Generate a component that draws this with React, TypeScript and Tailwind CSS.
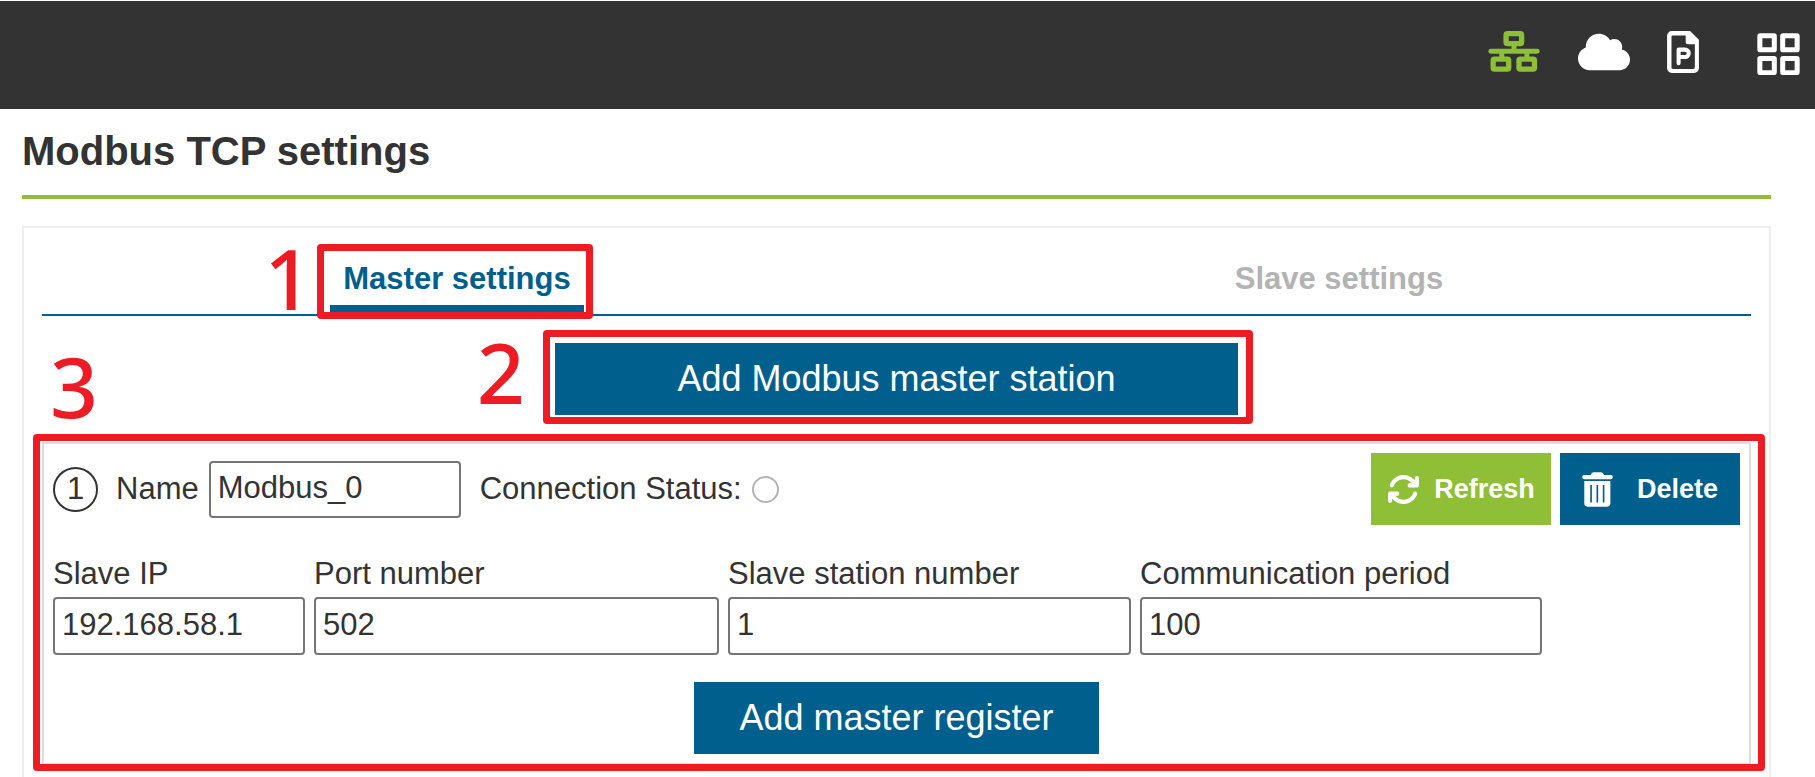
import { useState } from "react";
import { FaCloud } from "react-icons/fa";
import { FaArrowsRotate } from "react-icons/fa6";

function NetworkIcon() {
  return (
    <svg viewBox="0 0 156 124" className="h-[41px] w-[52px]" fill="none" stroke="currentColor" aria-hidden="true">
      <g strokeWidth="16">
        <rect x="54" y="8" width="47" height="30" rx="4" />
        <rect x="15" y="85" width="47" height="30" rx="4" />
        <rect x="93" y="85" width="47" height="30" rx="4" />
        <path d="M78 44V60M41 60V80M117 60V80" strokeWidth="15" />
      </g>
      <path d="M8 61H148" strokeWidth="15" strokeLinecap="round" />
    </svg>
  );
}

function ParameterFileIcon() {
  return (
    <svg viewBox="0 0 94 124" className="h-[42px] w-[32px]" aria-hidden="true">
      <path
        fill="currentColor"
        fillRule="evenodd"
        d="M14 0H68L94 26V110A14 14 0 0 1 80 124H14A14 14 0 0 1 0 110V14A14 14 0 0 1 14 0ZM17 13Q13 13 13 17V108Q13 112 17 112H77Q82 112 82 107V39H61Q55 39 55 33V13Z"
      />
      <path
        d="M34 95V55H53A11 11 0 0 1 53 77H34"
        fill="none"
        stroke="currentColor"
        strokeWidth="12"
        strokeLinecap="round"
        strokeLinejoin="round"
      />
    </svg>
  );
}

function GridIcon() {
  return (
    <svg viewBox="0 0 127 125" className="h-[42px] w-[43px]" fill="none" stroke="currentColor" strokeWidth="15" aria-hidden="true">
      <rect x="8" y="8" width="43" height="42" rx="1" />
      <rect x="76" y="8" width="43" height="42" rx="1" />
      <rect x="8" y="76" width="43" height="42" rx="1" />
      <rect x="76" y="76" width="43" height="42" rx="1" />
    </svg>
  );
}

function TrashIcon() {
  return (
    <svg viewBox="0 0 92 106" className="h-[35px] w-[31px]" fill="currentColor" aria-hidden="true">
      <path d="M25 9Q28 1 34 1H57Q63 1 66 9H87Q92 9 92 14V17Q92 22 87 22H5Q0 22 0 17V14Q0 9 5 9Z" />
      <path
        fillRule="evenodd"
        d="M6 27H85V95Q85 105 75 105H16Q6 105 6 95ZM24 39V92H29V39ZM43 39V92H48V39ZM62 39V92H67V39Z"
      />
    </svg>
  );
}

function Callout({ label, frame, place }: { label: string; frame: string; place: string }) {
  return (
    <>
      <span className={`pointer-events-none absolute rounded-[4px] border-[7px] border-[#ed1c24] ${frame}`} />
      <span
        className={`pointer-events-none absolute font-['Noto_Sans',sans-serif] text-[84px] leading-none font-medium text-[#ed1c24] ${place}`}
      >
        {label}
      </span>
    </>
  );
}

const inputClass =
  "min-w-0 rounded-[4px] border-2 border-[#767676] bg-white px-[7px] pb-[2px] text-[31px] leading-9 text-[#333]";

const fields = [
  { id: "slave-ip", label: "Slave IP", value: "192.168.58.1" },
  { id: "port", label: "Port number", value: "502" },
  { id: "station", label: "Slave station number", value: "1" },
  { id: "period", label: "Communication period", value: "100" },
];

function MasterStation() {
  return (
    <section className="relative mt-[27px] border-2 border-[#ddd] p-[9px] text-[31px] leading-9">
      <div className="flex items-center">
        <span className="flex size-[45px] items-center justify-center rounded-full border-2 border-[#333]">1</span>
        <label htmlFor="name" className="ml-[18px]">
          Name
        </label>
        <input id="name" defaultValue="Modbus_0" className={`ml-[10px] h-[57px] w-[252px] ${inputClass}`} />
        <span className="ml-[19px]">Connection Status:</span>
        <span className="ml-[10px] size-[27px] rounded-full border-2 border-[#b3b3b3]" />
        <div className="ml-auto flex gap-[9px] text-[27px] font-bold text-white">
          <button className="flex h-[72px] w-[180px] items-center justify-center gap-[14px] bg-[#8fbf36]">
            <FaArrowsRotate className="size-[33px]" />
            Refresh
          </button>
          <button className="flex h-[72px] w-[180px] items-center justify-center gap-[24px] bg-[#005f8c]">
            <TrashIcon />
            Delete
          </button>
        </div>
      </div>
      <div className="mt-[31px] grid grid-cols-[252fr_405fr_403fr_402fr_189fr] gap-[9px]">
        {fields.map((f) => (
          <div key={f.id} className="flex min-w-0 flex-col gap-[5px]">
            <label htmlFor={f.id} className="whitespace-nowrap">
              {f.label}
            </label>
            <input id={f.id} defaultValue={f.value} className={`h-[58px] w-full ${inputClass}`} />
          </div>
        ))}
      </div>
      <button className="mx-auto mt-[27px] block h-[72px] w-[24%] bg-[#005f8c] text-[36px] text-white">
        Add master register
      </button>
      <Callout label="3" frame="-left-[11px] -right-[16px] -top-[10px] -bottom-[8px]" place="left-[6px] -top-[100px]" />
    </section>
  );
}

export default function App() {
  const [tab, setTab] = useState("master");
  const tabClass = (name: string) =>
    name === tab ? "border-[#005f8c] text-[#005f8c]" : "border-transparent text-[#b3b3b3]";

  return (
    <div className="flex min-h-screen flex-col bg-white font-['Liberation_Sans',Arial,sans-serif] text-[#333]">
      <header className="border-t border-white">
        <nav className="flex h-[108px] items-center justify-end bg-[#333] pr-[15px] text-white">
          <button aria-label="Network" className="mb-2">
            <span className="text-[#8fbf36]">
              <NetworkIcon />
            </span>
          </button>
          <button aria-label="Cloud" className="mb-[6px] ml-[38px]">
            <FaCloud className="h-[42px] w-[52px]" />
          </button>
          <button aria-label="Parameters" className="mb-[6px] ml-[37px]">
            <ParameterFileIcon />
          </button>
          <button aria-label="Menu" className="mb-[2px] ml-[58px]">
            <GridIcon />
          </button>
        </nav>
      </header>
      <main className="flex flex-1 flex-col pt-[18px] pr-[44px] pl-[22px]">
        <h1 className="border-b-4 border-[#8fbf36] pb-5 text-[40px] leading-[48px] font-bold">Modbus TCP settings</h1>
        <div className="mt-[27px] flex-1 border-2 border-b-0 border-[#eee] px-[18px] pb-3">
          <div
            role="tablist"
            className="grid grid-cols-[830fr_824fr] justify-items-center gap-[55px] border-b-2 border-[#005f8c] pt-[33px] text-[31px] leading-9 font-bold"
          >
            <div className="relative">
              <button
                role="tab"
                aria-selected={tab === "master"}
                onClick={() => setTab("master")}
                className={`block border-b-[9px] px-[13px] pb-2 ${tabClass("master")}`}
              >
                Master settings
              </button>
              <Callout
                label="1"
                frame="-left-[13px] -right-[9px] -top-[17px] -bottom-[5px]"
                place="-left-[66px] -top-[25px]"
              />
            </div>
            <button
              role="tab"
              aria-selected={tab === "slave"}
              onClick={() => setTab("slave")}
              className={`block border-b-[9px] px-[13px] pb-2 ${tabClass("slave")}`}
            >
              Slave settings
            </button>
          </div>
          <div className="relative mx-auto mt-[27px] w-2/5">
            <button className="block h-[72px] w-full bg-[#005f8c] text-[36px] text-white">Add Modbus master station</button>
            <Callout
              label="2"
              frame="-left-[12px] -right-[15px] -top-[13px] -bottom-[9px]"
              place="-left-[78px] -top-[13px]"
            />
          </div>
          <MasterStation />
        </div>
      </main>
    </div>
  );
}
